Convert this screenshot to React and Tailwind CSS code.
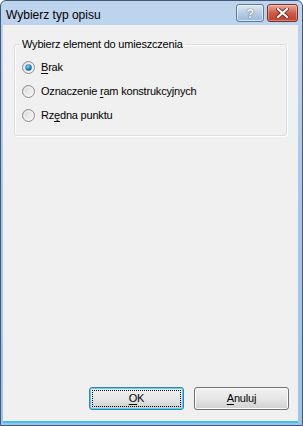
import React, { useState } from "react";

const Radio = ({ checked }) => (
    <svg width="13" height="13" viewBox="0 0 13 13" className="shrink-0">
        <defs>
            <linearGradient id="rbg" x1="0" y1="0" x2="1" y2="1">
                <stop offset="0" stopColor="#d4d4d4" />
                <stop offset="1" stopColor="#fbfbfb" />
            </linearGradient>
            <radialGradient id="rdot" cx="0.4" cy="0.35" r="0.7">
                <stop offset="0" stopColor="#8fd4f8" />
                <stop offset="0.5" stopColor="#2a8fd0" />
                <stop offset="1" stopColor="#0c4f84" />
            </radialGradient>
        </defs>
        <circle cx="6.5" cy="6.5" r="6" fill="url(#rbg)" stroke="#8e8f8f" strokeWidth="1" />
        <circle cx="6.5" cy="6.5" r="4.2" fill="none" stroke="#f4f4f4" strokeWidth="0.8" />
        {checked && <circle cx="6.5" cy="6.5" r="3.2" fill="url(#rdot)" />}
    </svg>
);

const options = [
    { id: "brak", pre: "", key: "B", post: "rak" },
    { id: "ram", pre: "Oznaczenie ", key: "r", post: "am konstrukcyjnych" },
    { id: "rzedna", pre: "Rz", key: "ę", post: "dna punktu" },
];

const App = () => {
    const [selected, setSelected] = useState("brak");

    return (
        <div
            className="w-[303px] h-[426px] flex flex-col rounded-t-[6px] border border-[#3f5a78] bg-gradient-to-b from-[#bfd5ee] via-[#a9c5e6] to-[#9fc3ea] overflow-hidden text-[11px] tracking-[-0.2px] text-black"
            style={{ fontFamily: '"Liberation Sans", Arial, sans-serif' }}
        >
            {/* Title bar */}
            <div className="h-[24px] shrink-0 flex items-start justify-between pl-[5px] pr-[4px]">
                <span className="mt-[5px] text-[12px] tracking-normal text-black">Wybierz typ opisu</span>
                <div className="flex gap-[3px] mt-[3px]">
                    <div className="w-[28px] h-[18px] rounded-[3px] border border-[#5d7a9c] bg-gradient-to-b from-[#dfe9f5] via-[#b8cde6] to-[#9db8da] flex items-center justify-center shadow-[inset_0_0_0_1px_rgba(255,255,255,0.6)]">
                        <span className="text-[13px] font-bold text-white leading-none [text-shadow:0_0_1px_#3d5673,0_0_1px_#3d5673]">?</span>
                    </div>
                    <div className="w-[31px] h-[18px] rounded-[3px] border border-[#7b2e26] bg-gradient-to-b from-[#e9a99c] via-[#cf5a45] to-[#c1402c] flex items-center justify-center shadow-[inset_0_0_0_1px_rgba(255,255,255,0.35)]">
                        <svg width="13" height="10" viewBox="0 0 13 10">
                            <path d="M2 1 L11 9 M11 1 L2 9" stroke="#5a1d16" strokeWidth="3.6" strokeLinecap="square" />
                            <path d="M2 1 L11 9 M11 1 L2 9" stroke="#ffffff" strokeWidth="2.2" strokeLinecap="square" />
                        </svg>
                    </div>
                </div>
            </div>

            {/* Client area */}
            <div className="flex-1 ml-[2px] mr-[4px] mb-[2px] bg-[#f0f0f0] flex flex-col px-[11px] pt-[12px] pb-[11px] border-b-2 border-[#3ac4ee]">
                {/* Group box */}
                <fieldset className="relative border border-[#d5dfe5] rounded-[3px] shadow-[inset_1px_1px_0_#ffffff,1px_1px_0_#ffffff] h-[99px] pl-[7px] pt-[5px]">
                    <legend className="ml-[-2px] px-[2px] leading-[14px]">Wybierz element do umieszczenia</legend>
                    <div className="flex flex-col gap-[7px] mt-[3px]">
                        {options.map((o) => (
                            <label
                                key={o.id}
                                className="flex items-center gap-[6px] h-[17px] cursor-default"
                                onClick={() => setSelected(o.id)}
                            >
                                <Radio checked={selected === o.id} />
                                <span>
                                    {o.pre}
                                    <span className="underline underline-offset-2">{o.key}</span>
                                    {o.post}
                                </span>
                            </label>
                        ))}
                    </div>
                </fieldset>

                <div className="flex-1" />

                {/* Buttons */}
                <div className="flex justify-end gap-[10px] mr-[-2px]">
                    <button className="w-[95px] h-[23px] rounded-[3px] border border-[#3c7fb1] bg-gradient-to-b from-[#f2f2f2] via-[#e6e6e6] to-[#d0d0d0] p-[2px] shadow-[inset_0_0_0_1px_#48d7f8]">
                        <div className="w-full h-full border border-dotted border-black flex items-center justify-center leading-none">
                            <span><span className="underline underline-offset-2">O</span>K</span>
                        </div>
                    </button>
                    <button className="w-[95px] h-[23px] rounded-[3px] border border-[#707070] bg-gradient-to-b from-[#f2f2f2] via-[#e6e6e6] to-[#d0d0d0] flex items-center justify-center shadow-[inset_0_0_0_1px_#fcfcfc]">
                        <span><span className="underline underline-offset-2">A</span>nuluj</span>
                    </button>
                </div>
            </div>
        </div>
    );
};

export default App;
